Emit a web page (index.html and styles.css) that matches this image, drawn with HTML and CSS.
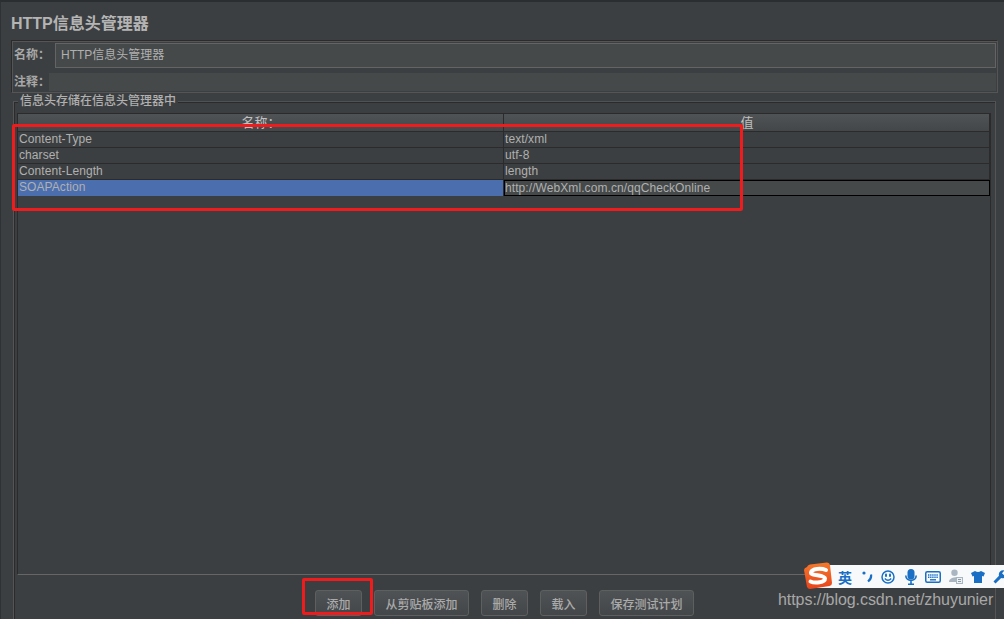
FILE: index.html
```html
<!DOCTYPE html>
<html lang="en">
<head>
  <meta charset="UTF-8">
  <title>HTTP信息头管理器</title>
  <link rel="stylesheet" href="styles.css">
</head>
<body>
  <div class="app">
    <h1 class="title">HTTP信息头管理器</h1>

    <div class="name-panel">
      <div class="field-row name-row">
        <label>名称：</label>
        <div class="text-input">HTTP信息头管理器</div>
      </div>
      <div class="field-row comment-row">
        <label>注释：</label>
        <div class="text-area"></div>
      </div>
    </div>

    <div class="group">
      <div class="group-title">信息头存储在信息头管理器中</div>
      <div class="table">
        <div class="row head">
          <div class="cell">名称：</div>
          <div class="cell">值</div>
        </div>
        <div class="row">
          <div class="cell">Content-Type</div>
          <div class="cell">text/xml</div>
        </div>
        <div class="row">
          <div class="cell">charset</div>
          <div class="cell">utf-8</div>
        </div>
        <div class="row">
          <div class="cell">Content-Length</div>
          <div class="cell">length</div>
        </div>
        <div class="row selected">
          <div class="cell">SOAPAction</div>
          <div class="cell editing">http://WebXml.com.cn/qqCheckOnline</div>
        </div>
      </div>

      <div class="buttons">
        <button>添加</button>
        <button>从剪贴板添加</button>
        <button>删除</button>
        <button>载入</button>
        <button>保存测试计划</button>
      </div>
    </div>
  </div>

  <!-- red annotations drawn over the screenshot -->
  <div class="mark mark-table"></div>
  <div class="mark mark-add"></div>

  <!-- input method bar -->
  <div class="ime">
    <svg class="ime-logo" width="30" height="28" viewBox="0 0 30 28">
      <defs>
        <linearGradient id="logo-fill" x1="0" y1="0" x2="0" y2="1">
          <stop offset="0" stop-color="#f47a2c"/>
          <stop offset="1" stop-color="#e8431c"/>
        </linearGradient>
      </defs>
      <path d="M4 5 Q4.500 3 7 2.500 L24 0.500 Q26.500 0.500 27 3 L29 21 Q29 23.500 26.500 24 L7 27 Q5 27 4 25 L1 8 Q1 6 4 5Z" fill="url(#logo-fill)"/>
      <path d="M23 8 C18 6 9 6.500 8 10.500 C7.500 14 21.500 12.500 22 16.500 C22 20.500 12 21.500 7.500 19.500" fill="none" stroke="#fff" stroke-width="4" stroke-linecap="round"/>
    </svg>
    <span class="ime-lang">英</span>
    <svg width="13" height="14" viewBox="0 0 13 14"><circle cx="4" cy="3" r="1.600" fill="#1a6fc4"/><path d="M11 4.500 C11.500 7 10.500 9.500 8 11.500" fill="none" stroke="#1a6fc4" stroke-width="2.200"/></svg>
    <svg width="14" height="14" viewBox="0 0 14 14"><circle cx="7" cy="7" r="6" fill="none" stroke="#1a6fc4" stroke-width="1.500"/><rect x="4" y="3.500" width="2" height="3.500" rx="1" fill="#1a6fc4"/><rect x="8" y="3.500" width="2" height="3.500" rx="1" fill="#1a6fc4"/><path d="M3.800 8.500 Q7 12 10.200 8.500" fill="none" stroke="#1a6fc4" stroke-width="1.400"/></svg>
    <svg width="14" height="16" viewBox="0 0 14 16"><rect x="4.500" y="0" width="7" height="10.500" rx="3.500" fill="#1a6fc4"/><path d="M2.800 6.500 C2.800 13 13.200 13 13.200 6.500 M8 11.500 V15 M5 15.300 H11" fill="none" stroke="#1a6fc4" stroke-width="1.600"/></svg>
    <svg width="16" height="12" viewBox="0 0 16 12"><rect x=".75" y=".75" width="14.500" height="10.500" rx="1.500" fill="none" stroke="#1a6fc4" stroke-width="1.500"/><path d="M3 4 H13 M3 6.300 H13" stroke="#1a6fc4" stroke-width="1.400" stroke-dasharray="1.400 .7"/><path d="M5 8.800 H11" stroke="#1a6fc4" stroke-width="1.400"/></svg>
    <svg width="14" height="15" viewBox="0 0 14 15"><circle cx="5.500" cy="3.700" r="3.200" fill="#a9b6c2"/><path d="M0 13 C0 7.500 10 7.500 11 9 H7 V13Z" fill="#a9b6c2"/><rect x="7.500" y="8.500" width="6" height="6" fill="#eef1f4" stroke="#a9b6c2"/><path d="M9 10.500 H12 M9 12.500 H12" stroke="#8c9aa6"/></svg>
    <svg width="14" height="12" viewBox="0 0 14 12"><path d="M4 0 Q7 2 10 0 L14 2 L12.500 5.500 L11 5 V12 H3 V5 L1.500 5.500 L0 2Z" fill="#1a6fc4"/></svg>
    <svg width="14" height="14" viewBox="0 0 14 14"><path d="M13.500 2.500 L10.800 5 L9 3.200 L11.500 0.500 C8 -0.500 5 2.500 6 5.800 L0.500 11.500 L2.500 13.500 L8.200 8 C11.500 9 14.500 6 13.500 2.500Z" fill="#1a6fc4"/></svg>
  </div>
  <div class="watermark">https://blog.csdn.net/zhuyunier</div>
</body>
</html>
```
FILE: styles.css
```css
* {
  box-sizing: border-box;
}

body {
  margin: 0;
  width: 1004px;
  height: 619px;
  overflow: hidden;
  position: relative;
  background: #3c3f41;
  color: #b0b0b0;
  font-family: "Liberation Sans", "Noto Sans CJK SC", sans-serif;
  font-size: 12px;
}

.app {
  height: 619px;
  padding: 0 7px 0 11px;
  border-top: 2px solid #2b2e30;
  border-left: 1px solid #2f3234;
  display: flex;
  flex-direction: column;
}

.title {
  margin: 13px 0 0 -1px;
  height: 25px;
  font-size: 16px;
  line-height: 18px;
  font-weight: bold;
  color: #b4b4b4;
}

.name-panel {
  flex: none;
  width: 987px;
  height: 53px;
  margin-left: -1px;
  border: 1px solid #2b2b2b;
  border-right-color: #555;
  border-bottom-color: #555;
  box-shadow: inset 1px 1px 0 #555;
  padding: 2px 1px 1px 2px;
}

.field-row {
  display: flex;
}

.field-row label {
  font-weight: bold;
  white-space: nowrap;
  flex: none;
  color: #a8a8a8;
}

.name-row {
  height: 25px;
}

.name-row label {
  width: 41px;
  line-height: 24px;
}

.text-input {
  flex: 1;
  background: #45494a;
  border: 1px solid #646464;
  padding-left: 5px;
  line-height: 23px;
}

.comment-row {
  margin-top: 5px;
  height: 18px;
}

.comment-row label {
  width: 35px;
  line-height: 19px;
}

.text-area {
  flex: 1;
  background: #45494a;
}

/* no bottom edge: the group runs off the window */
.group {
  position: relative;
  flex: 1;
  width: 983px;
  margin: 8px 0 0 1px;
  padding: 11px 4px 0 3px;
  border: 1px solid #555;
  border-top-color: #4f5254;
  border-bottom: 0;
  box-shadow: inset 1px 1px 0 #2b2b2b;
}

.group-title {
  position: absolute;
  top: -7px;
  left: 4px;
  padding: 0 2px;
  background: #3c3f41;
  font-weight: 500;
  line-height: 13px;
}

.table {
  height: 462px;
  width: 974px;
  border: 1px solid #2b2b2b;
  border-bottom-color: #666;
}

.row {
  display: grid;
  grid-template-columns: 486px 1fr;
  height: 16px;
  border-bottom: 1px solid #2b2b2b;
  letter-spacing: 0.08px;
}

.cell {
  padding-left: 1px;
  line-height: 14px;
  border-right: 1px solid #2b2b2b;
  white-space: nowrap;
}

.row.head {
  height: 18px;
  background: linear-gradient(#505355, #43474a);
  border-bottom-color: #2b2b2b;
}

.row.head .cell {
  text-align: center;
  font-size: 13px;
  line-height: 18px;
  color: #c0c0c0;
}

.row.selected {
  border-bottom-color: transparent;
}

.row.selected .cell:first-child {
  background: #4b6eaf;
}

.row.selected .editing {
  background: #45494a;
  border: 1px solid #000;
  height: 16px;
  line-height: 15px;
  padding-left: 0;
}

.buttons {
  display: flex;
  gap: 12px;
  margin: 15px 0 0 298px;
}

.buttons button {
  height: 26px;
  padding: 0 10.5px;
  min-width: 47px;
  border: 1px solid #5e6060;
  border-radius: 3px;
  background: linear-gradient(#505355, #43474a);
  color: #aaaaaa;
  font-family: inherit;
  font-size: 12px;
  font-weight: 500;
}

.mark {
  position: absolute;
  border: 3px solid #ee1c1c;
  border-radius: 2px;
}

.mark-table {
  left: 12px;
  top: 124px;
  width: 731px;
  height: 87px;
}

.mark-add {
  left: 302px;
  top: 578px;
  width: 71px;
  height: 37px;
}

.ime {
  position: absolute;
  left: 812px;
  top: 565px;
  width: 192px;
  height: 23px;
  background: #f7f9fb;
  display: flex;
  align-items: center;
  gap: 8px;
  padding-left: 26px;
}

.ime svg {
  flex: none;
}

.ime-logo {
  position: absolute;
  left: -9px;
  top: -3px;
}

.ime-lang {
  flex: none;
  font-size: 14px;
  font-weight: bold;
  color: #1a6fc4;
}

.watermark {
  position: absolute;
  left: 778px;
  top: 590px;
  font-size: 16px;
  line-height: 19px;
  letter-spacing: -0.06px;
  color: #a8a8a8;
}
```
